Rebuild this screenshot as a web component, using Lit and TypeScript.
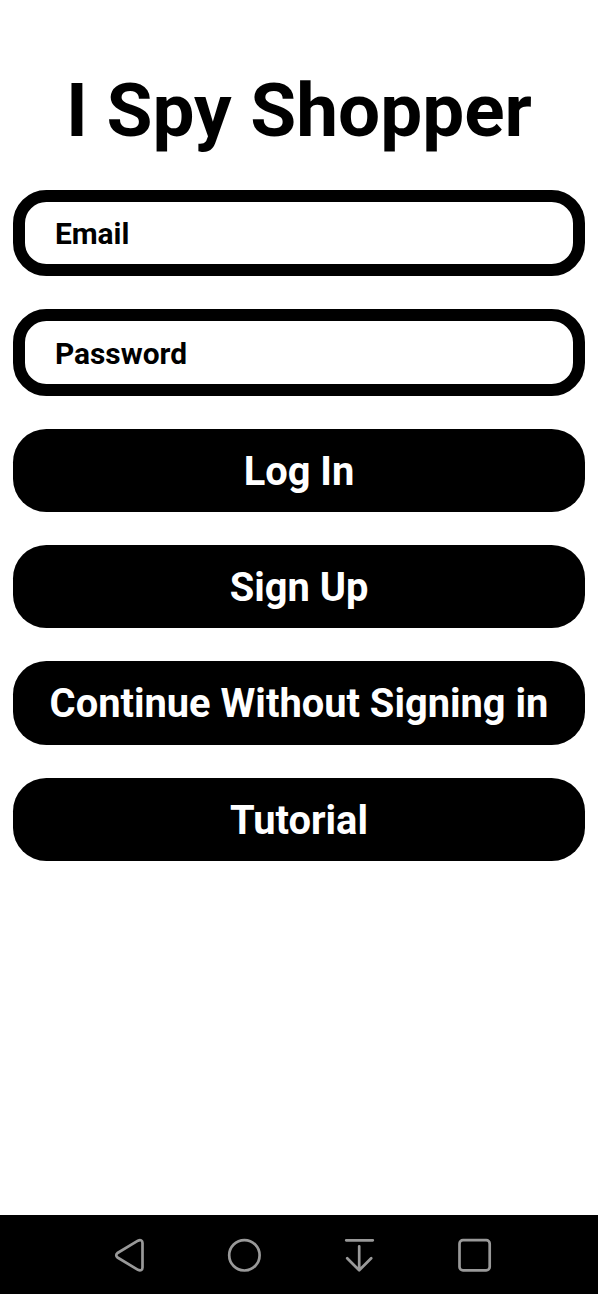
import { LitElement, html, css } from "lit";
import { customElement } from "lit/decorators.js";

@customElement("app-root")
class AppRoot extends LitElement {
  static styles = css`
    :host { display: flex; flex-direction: column; box-sizing: border-box; height: 1294px; background: #fff; font-family: Roboto, sans-serif; font-weight: 700; color: #000; }
    main { flex: 1; display: flex; flex-direction: column; padding: 67px 13.3px 0; }
    h1 { margin: 0 0 34.7px; font-size: 74.7px; line-height: 88px; text-align: center; white-space: nowrap; font-weight: 700; }
    .field { box-sizing: border-box; height: 86.4px; border: 12px solid #000; border-radius: 33.3px; padding: 3px 30px 0 29.6px; margin-bottom: 33.25px; display: flex; align-items: center; font-size: 29.9px; line-height: 36px; background: #fff; }
    .btn { box-sizing: border-box; height: 83.1px; border: 0; border-radius: 33.3px; margin: 0 0 33.15px; padding: 3px 0 0; background: #000; color: #fff; display: flex; align-items: center; justify-content: center; font: 700 39.85px/48px Roboto, sans-serif; white-space: nowrap; }
    nav { height: 79px; background: #000; }
    svg { display: block; fill: none; stroke: #999; stroke-width: 2.7; stroke-linejoin: round; stroke-linecap: round; }
  `;
  render() {
    return html`
      <main>
        <h1>I Spy Shopper</h1>
        <div class="field">Email</div>
        <div class="field">Password</div>
        ${["Log In", "Sign Up", "Continue Without Signing in", "Tutorial"].map((t) => html`<button class="btn">${t}</button>`)}
      </main>
      <nav>
        <svg width="598" height="79" viewBox="0 1215 598 79">
          <path d="M138 1240.700L117.500 1253Q115 1255.200 117.500 1257.500L138 1269.800C140.500 1271.200 142.500 1270 142.500 1267.500V1243C142.500 1240.500 140.500 1239.300 138 1240.700Z"/>
          <circle cx="244.400" cy="1255.300" r="15.200"/>
          <path d="M346.200 1240.300H372.800M359.200 1246.300V1270M347.200 1258.300L359.200 1270.200L371.200 1258.300"/>
          <rect x="459.500" y="1240.200" width="30.200" height="30.200" rx="3.500"/>
        </svg>
      </nav>`;
  }
}
